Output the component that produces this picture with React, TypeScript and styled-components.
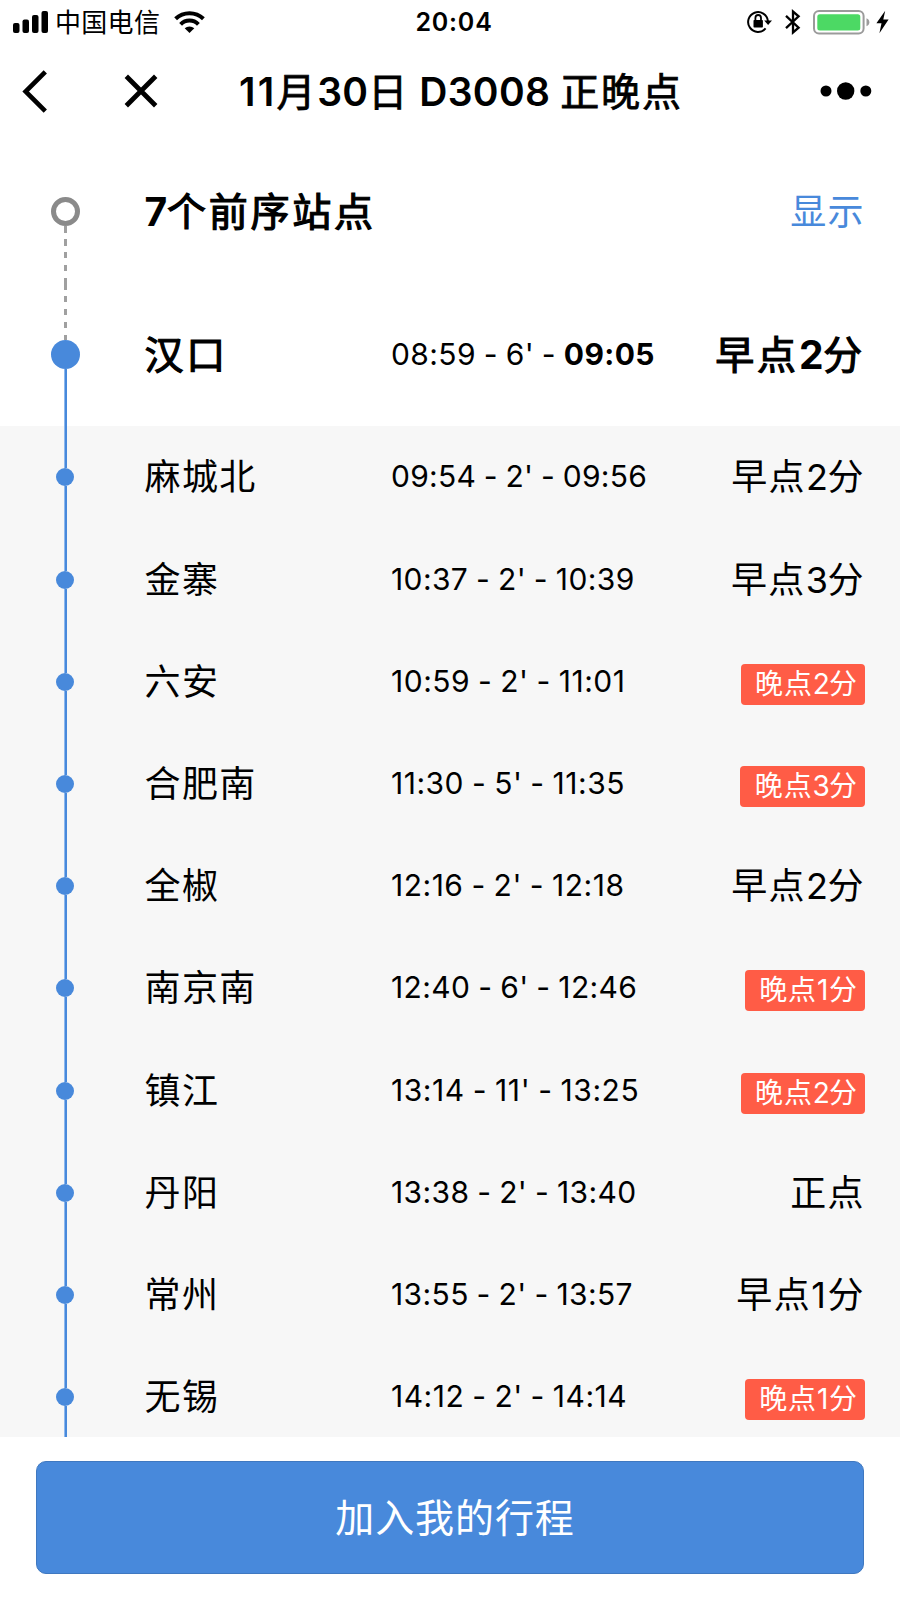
import React from "react";
import styled, { createGlobalStyle } from "styled-components";

const BLUE = "#4889db";
const GREY = "#8a8a8a";

const GlobalStyle = createGlobalStyle`
  * { box-sizing: border-box; }
  body {
    margin: 0;
    background: #fff;
    color: #000;
    font-family: Inter, "Noto Sans CJK SC", sans-serif;
  }
`;

const Page = styled.div`
  width: 900px;
  height: 1600px;
  display: flex;
  flex-direction: column;
  overflow: hidden;
  background: #fff;
`;

const StatusBar = styled.div`
  height: 45px;
  flex: none;
  display: grid;
  grid-template-columns: 1fr auto 1fr;
  grid-template-rows: 44px;
  align-items: center;
  padding: 0 11px 0 13px;
`;

const Carrier = styled.div`
  display: flex;
  align-items: center;
  font-size: 26px;
  line-height: 43px;
  letter-spacing: 0.3px;

  span { margin: 1px 14px 0 6px; }
`;

const Clock = styled.div`
  font-size: 25px;
  font-weight: 600;
  line-height: 44px;
  letter-spacing: 0.8px;
  margin-left: 6px;
`;

const Indicators = styled.div`
  display: flex;
  align-items: center;
  justify-content: flex-end;
  height: 44px;
`;

const NavBar = styled.div`
  height: 95px;
  flex: none;
  display: flex;
  align-items: flex-start;
  padding: 20px 28px 0 22px;

  svg { flex: none; }
`;

const Title = styled.h1`
  margin: 1px 0 0 81px;
  flex: 1;
  font-size: 39px;
  font-weight: 600;
  line-height: 52px;
  white-space: nowrap;
`;

const Stops = styled.div`
  height: 1297px;
  flex: none;
  overflow: hidden;
`;

const Row = styled.div<{ $major?: boolean }>`
  height: ${(p) => (p.$major ? "143.2px" : "102.2px")};
  background: ${(p) => (p.$major ? "#fff" : "#f7f7f7")};
  display: grid;
  grid-template-columns: 130.5px 246.5px 1fr auto;
  align-items: center;
  padding: 0 35px 0 14px;
`;

const Track = styled.div`
  align-self: stretch;
  width: 103px;
  display: flex;
  flex-direction: column;
  align-items: center;
`;

const Segment = styled.div<{ $kind: "none" | "dashed" | "solid" }>`
  flex: 1;
  width: 3px;
  background: ${(p) =>
    p.$kind === "none"
      ? "transparent"
      : p.$kind === "solid"
      ? `linear-gradient(to right, #8db8ee 0 1px, ${BLUE} 1px)`
      : `repeating-linear-gradient(#a0a0a0 0 6.5px, transparent 6.5px 13px)`};
`;

const Dot = styled.div<{ $kind: "ring" | "large" | "small" }>`
  flex: none;
  width: ${(p) => (p.$kind === "small" ? 18 : 29)}px;
  height: ${(p) => (p.$kind === "small" ? 18 : 29)}px;
  margin-left: ${(p) => (p.$kind === "small" ? -1 : 0)}px;
  border-radius: 50%;
  ${(p) => (p.$kind === "ring" ? `border: 5px solid ${GREY};` : `background: ${BLUE};`)}
`;

/* Chinese run; $stroke thickens the regular weight to a medium or semibold. */
const Han = styled.span<{ $spacing: number; $stroke?: number }>`
  font-weight: 400;
  letter-spacing: ${(p) => p.$spacing}px;
  -webkit-text-stroke: ${(p) => p.$stroke ?? 0}px currentColor;
`;

const Latin = styled.span<{ $spacing: number }>`
  letter-spacing: ${(p) => p.$spacing}px;
`;

type MixedProps = { text: string; han: number; latin: number; ones: number; stroke?: number };

const Mixed = ({ text, han, latin, ones, stroke }: MixedProps) => (
  <>
    {(text.match(/[\u4e00-\u9fff]+|1+(?![0-9])|[^\u4e00-\u9fff]+/g) ?? []).map((run, i) =>
      /[\u4e00-\u9fff]/.test(run) ? (
        <Han key={i} $spacing={han} $stroke={stroke}>{run}</Han>
      ) : (
        <Latin key={i} $spacing={/^1+$/.test(run) ? ones : latin}>{run}</Latin>
      )
    )}
  </>
);

const Name = styled.div<{ $strong?: boolean }>`
  font-size: ${(p) => (p.$strong ? 39 : 36)}px;
  font-weight: ${(p) => (p.$strong ? 700 : 400)};
  line-height: 52px;
  white-space: nowrap;
`;

const Times = styled.div<{ $tracking: number }>`
  margin-top: -2px;
  font-size: 30px;
  line-height: 52px;
  letter-spacing: ${(p) => p.$tracking}px;
  word-spacing: -1px;
  white-space: nowrap;
`;

const Status = styled(Name)`
  text-align: right;
`;

const Late = styled.div`
  height: 41px;
  margin-top: 5px;
  padding: 0 7px 0 14.5px;
  border-radius: 4px;
  background: #ff5c46;
  color: #fff;
  font-size: 28px;
  line-height: 41px;
  white-space: nowrap;
`;

const ShowLink = styled(Name)`
  color: ${BLUE};
`;

const Footer = styled.div`
  flex: 1;
  padding: 24px 36px 26px;
  background: #fff;
`;

const AddButton = styled.button`
  display: block;
  width: 100%;
  height: 113px;
  padding: 0 0 0 10px;
  border: 1px solid #3f78c0;
  border-radius: 10px;
  background: ${BLUE};
  color: #fff;
  font: 400 39px/110px Inter, "Noto Sans CJK SC", sans-serif;
  letter-spacing: 0.9px;
`;

type Stop = { name: string; arrive: string; stay: number; depart: string; state: string };

const stops: Stop[] = [
  { name: "麻城北", arrive: "09:54", stay: 2, depart: "09:56", state: "早点2分" },
  { name: "金寨", arrive: "10:37", stay: 2, depart: "10:39", state: "早点3分" },
  { name: "六安", arrive: "10:59", stay: 2, depart: "11:01", state: "晚点2分" },
  { name: "合肥南", arrive: "11:30", stay: 5, depart: "11:35", state: "晚点3分" },
  { name: "全椒", arrive: "12:16", stay: 2, depart: "12:18", state: "早点2分" },
  { name: "南京南", arrive: "12:40", stay: 6, depart: "12:46", state: "晚点1分" },
  { name: "镇江", arrive: "13:14", stay: 11, depart: "13:25", state: "晚点2分" },
  { name: "丹阳", arrive: "13:38", stay: 2, depart: "13:40", state: "正点" },
  { name: "常州", arrive: "13:55", stay: 2, depart: "13:57", state: "早点1分" },
  { name: "无锡", arrive: "14:12", stay: 2, depart: "14:14", state: "晚点1分" },
];

/* The digit 1 is narrow, so lines with many of them are tracked a little wider. */
const tracking = (line: string) => 0.26 + 0.06 * (line.split("1").length - 1);

const Signal = () => (
  <svg width="36" height="22" viewBox="0 0 36 22">
    <rect x="0" y="12" width="6.5" height="10" rx="2" />
    <rect x="9.5" y="8.5" width="6.5" height="13.5" rx="2" />
    <rect x="19" y="4" width="6.5" height="18" rx="2" />
    <rect x="28.5" y="0" width="6.5" height="22" rx="2" />
  </svg>
);

const Wifi = () => (
  <svg width="31" height="22" viewBox="0 0 31 22" fill="none" stroke="#000" strokeWidth="4">
    <path d="M1.6 7.8 A20 20 0 0 1 29.4 7.8" />
    <path d="M6.6 13.3 A12.6 12.6 0 0 1 24.4 13.3" />
    <path d="M15.5 22 L10.7 17.3 A7 7 0 0 1 20.3 17.3 Z" fill="#000" stroke="none" />
  </svg>
);

const RotationLock = () => (
  <svg width="26" height="24" viewBox="0 0 26 24" fill="none" stroke="#000" strokeWidth="2">
    <path d="M20.9 11 A9.9 9.9 0 1 0 18.6 18.4" />
    <path d="M17.2 10.5 H25 L21.1 15 Z" fill="#000" stroke="none" />
    <rect x="6.5" y="10" width="9.4" height="7.6" rx="0.8" fill="#000" stroke="none" />
    <path d="M8.4 10.5 V8 A2.8 3 0 0 1 14 8 V10.5" strokeWidth="1.8" />
  </svg>
);

const Bluetooth = () => (
  <svg width="16" height="26" viewBox="0 0 16 26" fill="none" stroke="#000" strokeWidth="2.3">
    <path d="M1 6.8 L13.6 18.6 L8 23.4 V2.6 L13.6 7.4 L1 19.2" />
  </svg>
);

const Battery = () => (
  <svg width="57" height="25" viewBox="0 0 57 25">
    <rect x="1" y="1" width="49.6" height="22.6" rx="5" fill="#fff" stroke="#9b9b9b" strokeWidth="2" />
    <rect x="4.3" y="4.2" width="43" height="16.2" rx="2.5" fill="#4cd964" />
    <path d="M53.5 8.3 C57.3 9.5 57.3 15.1 53.5 16.3 Z" fill="#9b9b9b" />
  </svg>
);

const Bolt = () => (
  <svg width="13" height="24" viewBox="0 0 13 24">
    <path d="M9.2 0.8 L0.4 13.2 H5.5 L3.4 23.2 L12.6 9.6 H7.3 Z" />
  </svg>
);

const Back = () => (
  <svg width="26" height="44" viewBox="0 0 26 44" fill="none" stroke="#000" strokeWidth="4.6">
    <path d="M23.3 2.8 L3.6 22.5 L23.3 42.2" />
  </svg>
);

const Close = () => (
  <svg width="34" height="34" viewBox="0 0 34 34" fill="none" stroke="#000" strokeWidth="4.8">
    <path d="M2.3 2.3 L31.7 31.7 M31.7 2.3 L2.3 31.7" />
  </svg>
);

const More = () => (
  <svg width="52" height="18" viewBox="0 0 52 18">
    <circle cx="6" cy="9" r="5.5" />
    <circle cx="25.7" cy="9" r="8.7" />
    <circle cx="45.8" cy="9" r="5.5" />
  </svg>
);

const NavIcon = styled.div<{ $left: number; $top: number }>`
  display: flex;
  margin: ${(p) => p.$top}px 0 0 ${(p) => p.$left}px;
`;

const Gap = styled.i<{ $w: number }>`
  width: ${(p) => p.$w}px;
`;

const Heading = ({ text }: { text: string }) => (
  <Mixed text={text} han={2.8} latin={-0.3} ones={0} stroke={1.2} />
);

const Plain = ({ text }: { text: string }) => (
  <Mixed text={text} han={1.4} latin={-0.4} ones={1.8} />
);

export default function App() {
  return (
    <Page>
      <GlobalStyle />
      <StatusBar>
        <Carrier>
          <Signal />
          <span>中国电信</span>
          <Wifi />
        </Carrier>
        <Clock>20:04</Clock>
        <Indicators>
          <RotationLock />
          <Gap $w={12} />
          <Bluetooth />
          <Gap $w={12} />
          <Battery />
          <Gap $w={6} />
          <Bolt />
        </Indicators>
      </StatusBar>
      <NavBar>
        <NavIcon $left={0} $top={4}>
          <Back />
        </NavIcon>
        <NavIcon $left={76} $top={9}>
          <Close />
        </NavIcon>
        <Title>
          <Mixed text="11月30日 D3008 正晚点" han={1.8} latin={0.3} ones={2.2} stroke={0.8} />
        </Title>
        <NavIcon $left={0} $top={17}>
          <More />
        </NavIcon>
      </NavBar>
      <Stops>
        <Row $major>
          <Track>
            <Segment $kind="none" />
            <Dot $kind="ring" />
            <Segment $kind="dashed" />
          </Track>
          <Name $strong>
            <Heading text="7个前序站点" />
          </Name>
          <span />
          <ShowLink>
            <Plain text="显示" />
          </ShowLink>
        </Row>
        <Row $major>
          <Track>
            <Segment $kind="dashed" />
            <Dot $kind="large" />
            <Segment $kind="solid" />
          </Track>
          <Name $strong>
            <Heading text="汉口" />
          </Name>
          <Times $tracking={0.38}>
            08:59 - 6' - <b>09:05</b>
          </Times>
          <Status $strong>
            <Heading text="早点2分" />
          </Status>
        </Row>
        {stops.map((s) => {
          const line = `${s.arrive} - ${s.stay}' - ${s.depart}`;
          return (
            <Row key={s.name}>
              <Track>
                <Segment $kind="solid" />
                <Dot $kind="small" />
                <Segment $kind="solid" />
              </Track>
              <Name>
                <Plain text={s.name} />
              </Name>
              <Times $tracking={tracking(line)}>{line}</Times>
              {s.state.startsWith("晚") ? (
                <Late>
                  <Mixed text={s.state} han={0.9} latin={-0.8} ones={0.7} />
                </Late>
              ) : (
                <Status>
                  <Plain text={s.state} />
                </Status>
              )}
            </Row>
          );
        })}
      </Stops>
      <Footer>
        <AddButton>加入我的行程</AddButton>
      </Footer>
    </Page>
  );
}
